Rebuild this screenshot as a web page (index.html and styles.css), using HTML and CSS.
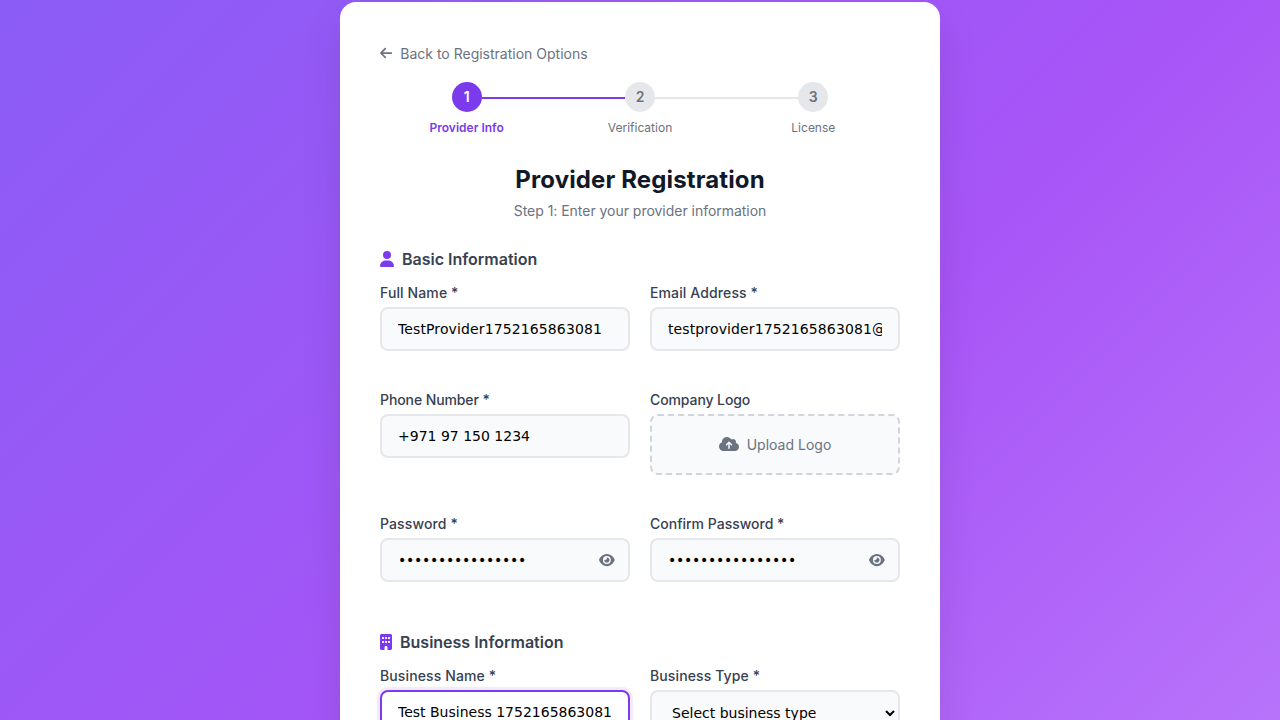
FILE: index.html
```html
<!DOCTYPE html>
<html lang="en">
<head>
<meta charset="utf-8">
<title>Provider Registration</title>
<link rel="stylesheet" href="styles.css">
</head>
<body>
<div class="page">
  <main class="card">
    <a class="back">
      <svg class="back-icon" viewBox="0 0 448 512"><path d="M9.400 233.400c-12.500 12.500-12.500 32.800 0 45.300l160 160c12.500 12.500 32.800 12.500 45.300 0s12.500-32.800 0-45.300L109.200 288 416 288c17.700 0 32-14.300 32-32s-14.300-32-32-32l-306.700 0L214.600 118.600c12.500-12.500 12.500-32.800 0-45.300s-32.800-12.500-45.300 0l-160 160z"/></svg>
      <span>Back to Registration Options</span>
    </a>
    <div class="steps">
      <div class="step active"><div class="track"><i class="rail blank"></i><b class="dot">1</b><i class="rail done"></i></div><span class="step-label">Provider Info</span></div>
      <div class="step"><div class="track"><i class="rail done"></i><b class="dot">2</b><i class="rail"></i></div><span class="step-label">Verification</span></div>
      <div class="step"><div class="track"><i class="rail"></i><b class="dot">3</b><i class="rail blank"></i></div><span class="step-label">License</span></div>
    </div>
    <h1 class="title">Provider Registration</h1>
    <p class="subtitle">Step 1: Enter your provider information</p>

    <h2 class="section-title">
      <svg class="user-icon" viewBox="0 0 448 512"><path d="M224 256A128 128 0 1 0 224 0a128 128 0 1 0 0 256zm-45.700 48C79.800 304 0 383.800 0 482.300C0 498.700 13.300 512 29.700 512l388.600 0c16.400 0 29.700-13.300 29.700-29.700C448 383.800 368.200 304 269.700 304l-91.400 0z"/></svg>
      Basic Information
    </h2>
    <div class="row">
      <div class="field"><label class="label spaced">Full Name *</label><input class="input spaced" type="text" value="TestProvider1752165863081"></div>
      <div class="field"><label class="label spaced">Email Address *</label><input class="input spaced" type="text" value="testprovider1752165863081@example.com"></div>
    </div>
    <div class="row">
      <div class="field"><label class="label snug">Phone Number *</label><input class="input" type="text" value="+971 97 150 1234"></div>
      <div class="field"><span class="label snug">Company Logo</span>
        <div class="upload">
          <svg class="cloud-icon" viewBox="0 0 640 512"><path fill-rule="evenodd" d="M144 480C64.500 480 0 415.500 0 336c0-62.800 40.200-116.200 96.200-135.900c-.1-2.700-.2-5.400-.2-8.100c0-88.400 71.600-160 160-160c59.300 0 111 32.200 138.700 80.200C409.900 102 428.300 96 448 96c53 0 96 43 96 96c0 12.200-2.300 23.800-6.400 34.600C596 238.400 640 290.100 640 352c0 70.700-57.300 128-128 128l-368 0zm79-217c-9.400 9.400-9.400 24.600 0 33.900s24.600 9.400 33.900 0l39-39L296 392c0 13.300 10.700 24 24 24s24-10.700 24-24l0-134.100 39 39c9.400 9.400 24.600 9.400 33.900 0s9.400-24.600 0-33.900l-80-80c-9.400-9.400-24.600-9.400-33.900 0l-80 80z"/></svg>
          <span>Upload Logo</span>
        </div>
      </div>
    </div>
    <div class="row">
      <div class="field"><label class="label spaced">Password *</label>
        <div class="secret"><input class="input" type="password" value="TestPassword123!">
          <svg class="eye-icon" viewBox="0 0 576 512"><path d="M288 32c-80.800 0-145.500 36.800-192.600 80.600C48.600 156 17.300 208 2.500 243.700c-3.300 7.900-3.300 16.700 0 24.600C17.300 304 48.600 356 95.400 399.400C142.500 443.200 207.200 480 288 480s145.500-36.800 192.600-80.600c46.800-43.500 78.100-95.400 93-131.100c3.300-7.900 3.300-16.700 0-24.600c-14.900-35.700-46.200-87.700-93-131.100C433.500 68.800 368.800 32 288 32zM144 256a144 144 0 1 1 288 0 144 144 0 1 1-288 0zm144-64c0 35.300-28.700 64-64 64c-7.100 0-13.900-1.200-20.300-3.300c-5.500-1.800-11.900 1.600-11.700 7.400c.3 6.900 1.300 13.800 3.200 20.700c13.700 51.200 66.400 81.600 117.600 67.900s81.600-66.400 67.900-117.600c-11.100-41.500-47.800-69.400-88.600-71.100c-5.800-.2-9.200 6.100-7.400 11.700c2.100 6.400 3.300 13.200 3.300 20.300z"/></svg></div>
      </div>
      <div class="field"><label class="label">Confirm Password *</label>
        <div class="secret"><input class="input" type="password" value="TestPassword123!">
          <svg class="eye-icon" viewBox="0 0 576 512"><path d="M288 32c-80.800 0-145.500 36.800-192.600 80.600C48.600 156 17.300 208 2.500 243.700c-3.300 7.900-3.300 16.700 0 24.600C17.300 304 48.600 356 95.400 399.400C142.500 443.200 207.200 480 288 480s145.500-36.800 192.600-80.600c46.800-43.500 78.100-95.400 93-131.100c3.300-7.900 3.300-16.700 0-24.600c-14.900-35.700-46.200-87.700-93-131.100C433.500 68.800 368.800 32 288 32zM144 256a144 144 0 1 1 288 0 144 144 0 1 1-288 0zm144-64c0 35.300-28.700 64-64 64c-7.100 0-13.900-1.200-20.300-3.300c-5.500-1.800-11.900 1.600-11.700 7.400c.3 6.900 1.300 13.800 3.200 20.700c13.700 51.200 66.400 81.600 117.600 67.900s81.600-66.400 67.900-117.600c-11.100-41.500-47.800-69.400-88.600-71.100c-5.800-.2-9.200 6.100-7.400 11.700c2.100 6.400 3.300 13.200 3.300 20.300z"/></svg></div>
      </div>
    </div>

    <h2 class="section-title business">
      <svg class="building-icon" viewBox="0 0 384 512"><path fill-rule="evenodd" d="M48 0C21.500 0 0 21.500 0 48L0 464c0 26.500 21.500 48 48 48l96 0 0-80c0-26.500 21.500-48 48-48s48 21.500 48 48l0 80 96 0c26.500 0 48-21.500 48-48l0-416c0-26.500-21.500-48-48-48L48 0zM64 240c0-8.800 7.200-16 16-16l32 0c8.800 0 16 7.200 16 16l0 32c0 8.800-7.200 16-16 16l-32 0c-8.800 0-16-7.200-16-16l0-32zm112-16l32 0c8.800 0 16 7.200 16 16l0 32c0 8.800-7.200 16-16 16l-32 0c-8.800 0-16-7.200-16-16l0-32c0-8.800 7.200-16 16-16zm80 16c0-8.800 7.200-16 16-16l32 0c8.800 0 16 7.200 16 16l0 32c0 8.800-7.200 16-16 16l-32 0c-8.800 0-16-7.200-16-16l0-32zM80 96l32 0c8.800 0 16 7.200 16 16l0 32c0 8.800-7.200 16-16 16l-32 0c-8.800 0-16-7.200-16-16l0-32c0-8.800 7.200-16 16-16zm80 16c0-8.800 7.200-16 16-16l32 0c8.800 0 16 7.200 16 16l0 32c0 8.800-7.200 16-16 16l-32 0c-8.800 0-16-7.200-16-16l0-32zM272 96l32 0c8.800 0 16 7.200 16 16l0 32c0 8.800-7.200 16-16 16l-32 0c-8.800 0-16-7.200-16-16l0-32c0-8.800 7.200-16 16-16z"/></svg>
      Business Information
    </h2>
    <div class="row">
      <div class="field"><label class="label spaced">Business Name *</label><input class="input focused" type="text" value="Test Business 1752165863081"></div>
      <div class="field"><label class="label spaced">Business Type *</label><select class="input select"><option>Select business type</option></select></div>
    </div>
  </main>
</div>
</body>
</html>
```
FILE: styles.css
```css
* { box-sizing: border-box; margin: 0; padding: 0; }
body { height: 720px; overflow: hidden; font-family: Inter, "Liberation Sans", sans-serif; }
svg { flex: none; fill: currentColor; }
.page { height: 1160px; padding-top: 2px; background: linear-gradient(135deg, #8b5cf6 0%, #a855f7 50%, #c084fc 100%); }
.card { width: 600px; height: 1140px; margin: 0 auto; padding: 40px; background: #fff; border-radius: 16px; box-shadow: 0 20px 40px rgba(0, 0, 0, .1); }

.back { display: flex; align-items: center; gap: 8px; height: 22px; margin-bottom: 18px; font-size: 14px; color: #6b7280; }
.back-icon { width: 12.25px; height: 14px; }

.steps { display: grid; grid-template-columns: repeat(3, 1fr); }
.step { display: flex; flex-direction: column; align-items: center; gap: 8px; color: #6b7280; }
.track { display: flex; align-items: center; width: 100%; }
.rail { flex: 1; height: 2px; margin-top: 2px; background: #e5e7eb; }
.rail.done { background: #7c3aed; }
.rail.blank { background: transparent; }
.dot { width: 30px; height: 30px; border-radius: 50%; background: #e5e7eb; font-size: 14px; font-weight: 600; line-height: 30px; text-align: center; }
.step-label { font-size: 12px; line-height: 16px; }
.active .dot { background: #7c3aed; color: #fff; }
.active .step-label { color: #7c3aed; font-weight: 600; }

.title { margin-top: 29px; font-size: 24px; font-weight: 700; line-height: 30px; letter-spacing: .13px; text-align: center; color: #111827; }
.subtitle { margin-top: 6px; font-size: 14px; line-height: 20px; letter-spacing: -.03px; text-align: center; color: #6b7280; }

.section-title { display: flex; align-items: center; gap: 8px; margin: 28px 0 15px; font-size: 16px; font-weight: 600; line-height: 20px; color: #374151; }
.section-title svg { color: #7c3aed; }
.section-title.business { margin-top: 50px; }
.user-icon { width: 14px; height: 16px; }
.building-icon { width: 12px; height: 16px; }

.row { display: grid; grid-template-columns: 1fr 1fr; gap: 20px; }
.row + .row { margin-top: 40px; }
.field { display: flex; flex-direction: column; gap: 5px; min-width: 0; }
.label { font-size: 14px; font-weight: 500; line-height: 18px; color: #374151; }
.input { width: 100%; height: 44px; padding: 0 16px; border: 2px solid #e5e7eb; border-radius: 8px; outline: none; background: #f9fafb; color: #000; font-family: "DejaVu Sans", sans-serif; font-size: 14px; }
.spaced { letter-spacing: .12px; }
.snug { letter-spacing: -.1px; }
.input.focused { border-color: #7c3aed; background: #fff; box-shadow: 0 0 0 3px rgba(124, 58, 237, .1); }
.select { height: 46px; }
.upload { display: flex; align-items: center; justify-content: center; gap: 8px; height: 61px; border: 2px dashed #d1d5db; border-radius: 8px; background: #f9fafb; font-size: 14px; color: #6b7280; }
.cloud-icon { width: 20px; height: 16px; margin-top: -1px; }
.secret { position: relative; }
.secret .input { display: block; padding-right: 45px; letter-spacing: -.26px; }
.eye-icon { position: absolute; right: 15.5px; top: 15px; width: 15.75px; height: 14px; color: #6b7280; }
```
